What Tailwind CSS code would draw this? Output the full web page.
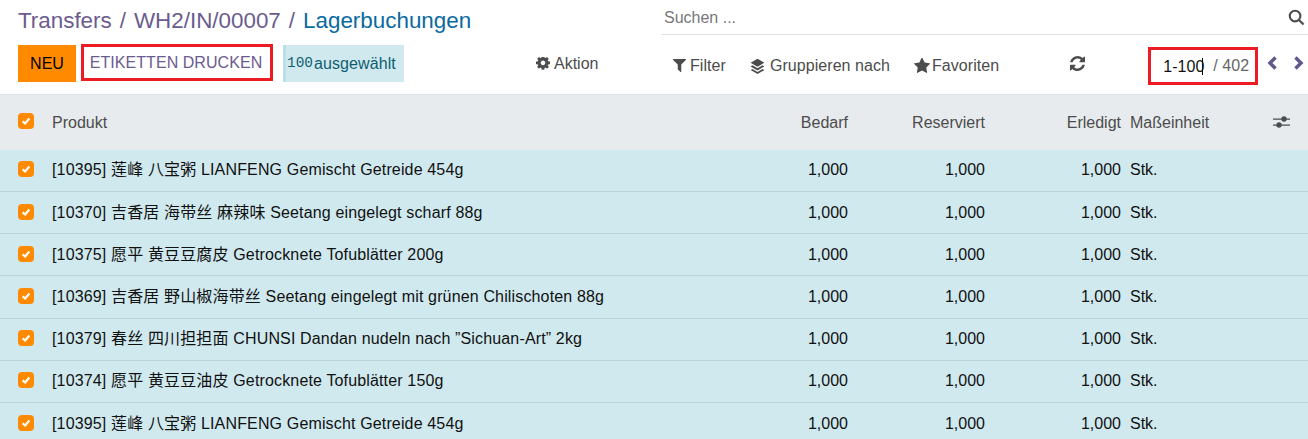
<!DOCTYPE html>
<html lang="de">
<head>
    <meta charset="UTF-8">
    <title>Lagerbuchungen</title>
    <script src="https://cdn.jsdelivr.net/npm/@tailwindcss/browser@4"></script>
</head>
<body class="bg-white h-[439px] w-[1308px] overflow-hidden font-['Liberation_Sans','Noto_Sans_CJK_SC',sans-serif] text-[16px] text-[#212529]">

    <!-- control panel -->
    <div class="flex h-[95px] border-b border-[#dee2e6]">
        <div class="w-[661px] shrink-0 pl-[18px]">
            <div class="flex h-[44px] items-center gap-[8px] pb-[2px] text-[22.4px] text-[#6b5b8f]">
                <span>Transfers</span><span>/</span><span>WH2/IN/00007</span><span>/</span><span class="text-[#0a6aa0]">Lagerbuchungen</span>
            </div>
            <div class="flex h-[38px] items-start">
                <button class="mt-[1px] h-[37px] w-[58px] bg-[#ff8a00] text-black">NEU</button>
                <button class="ml-[5px] h-[37px] w-[192px] border-[3px] border-[#ed1c24] pr-[2px] tracking-[0.06px] text-[#6b5b8f]">ETIKETTEN DRUCKEN</button>
                <div class="mt-[1px] ml-[10px] flex h-[37px] w-[121px] items-center border-l-[3px] border-[#b9e0e8] bg-[#d0e9ef] pl-[1px] text-[#0f5e70]">
                    <span class="font-['Liberation_Mono'] text-[14.4px]">100</span><span class="ml-[1px] tracking-[0.1px]">ausgewählt</span>
                </div>
                <div class="ml-[132px] flex h-[38px] items-center gap-[4px] pt-[2px] text-[#4c4c4c]">
                    <svg class="h-[14px] w-[14px]" viewBox="0 0 1536 1536" fill="#4c4c4c"><path d="M1024 640q0-106-75-181t-181-75-181 75-75 181 75 181 181 75 181-75 75-181zm512-109v222q0 12-8 23t-20 13l-185 28q-19 54-39 91 35 50 107 138 10 12 10 25t-9 23q-27 37-99 108t-94 71q-12 0-26-9l-138-108q-44 23-91 38-16 136-29 186-7 28-36 28h-222q-14 0-24.500-8.500t-11.500-21.500l-28-184q-49-16-90-37l-141 107q-10 9-25 9-14 0-25-11-126-114-165-168-7-10-7-23 0-12 8-23 15-21 51-66.500t54-70.500q-27-50-41-99l-183-27q-13-2-21-12.500t-8-23.500v-222q0-12 8-23t19-13l186-28q14-46 39-92-40-57-107-138-10-12-10-24 0-10 9-23 26-36 98.500-107.500t94.500-71.500q13 0 26 10l138 107q44-23 91-38 16-136 29-186 7-28 36-28h222q14 0 24.500 8.500t11.500 21.500l28 184q49 16 90 37l142-107q9-9 24-9 13 0 25 10 129 119 165 170 7 8 7 22 0 12-8 23-15 21-51 66.500t-54 70.500q26 50 41 98l183 28q13 2 21 12.500t8 23.500z"/></svg>
                    <span>Aktion</span>
                </div>
            </div>
        </div>
        <div class="flex-1">
            <div class="flex h-[35px] items-center justify-between border-b border-[#dee2e6] pl-[3px] pr-[3px] text-[#777]">
                <span class="mt-[2px]">Suchen ...</span>
                <svg class="h-[17px] w-[17px]" viewBox="0 0 24 24" fill="none" stroke="#4c4c4c" stroke-width="3"><circle cx="10" cy="10" r="7.500"/><path d="M15.500 15.500 22 22"/></svg>
            </div>
            <div class="flex h-[59px] items-center pt-[2px] tracking-[0.06px] text-[#4c4c4c]">
                <svg class="ml-[12px] h-[13px] w-[13px]" viewBox="0 128 1408 1408" fill="#4c4c4c"><path d="M1403 167q17 41-14 70l-493 493v742q0 42-39 59-13 5-25 5-27 0-45-19l-256-256q-19-19-19-45v-486l-493-493q-31-29-14-70 17-39 59-39h1280q42 0 59 39z"/></svg>
                <span class="ml-[4px]">Filter</span>
                <svg class="ml-[24px] h-[16px] w-[15px]" viewBox="0 0 24 24" preserveAspectRatio="none" fill="#4c4c4c"><path d="M12 1 23 7l-11 6L1 7z"/><path d="M4 11l8 4.400 8-4.400 3 1.600-11 6-11-6z"/><path d="M4 16.500l8 4.400 8-4.400 3 1.600-11 5.900-11-5.900z"/></svg>
                <span class="ml-[5px]">Gruppieren nach</span>
                <svg class="ml-[24px] h-[16px] w-[16px]" viewBox="0 30 1664 1664" fill="#4c4c4c"><path d="M1664 615q0 22-26 48l-363 354 86 500q1 7 1 20 0 21-10.500 35.500t-30.500 14.500q-19 0-40-12l-449-236-449 236q-22 12-40 12-21 0-31.500-14.500t-10.500-35.500q0-6 2-20l86-500-364-354q-25-27-25-48 0-37 56-46l502-73 225-455q19-41 49-41t49 41l225 455 502 73q56 9 56 46z"/></svg>
                <span class="ml-[2px]">Favoriten</span>
                <svg class="ml-[71px] mb-[5px] h-[15px] w-[15px]" viewBox="0 0 1536 1536" fill="#4c4c4c"><path d="M1511 928q0 5-1 7-64 268-268 434.500t-478 166.500q-146 0-282.500-55t-243.500-157l-129 129q-19 19-45 19t-45-19-19-45v-448q0-26 19-45t45-19h448q26 0 45 19t19 45-19 45l-137 137q71 66 161 102t187 36q134 0 250-65t186-179q11-17 53-117 8-23 30-23h192q13 0 22.500 9.500t9.500 22.500zm25-800v448q0 26-19 45t-45 19h-448q-26 0-45-19t-19-45 19-45l138-138q-148-137-349-137-134 0-250 65t-186 179q-11 17-53 117-8 23-30 23h-199q-13 0-22.500-9.500t-9.500-22.500v-7q65-268 270-434.500t480-166.500q146 0 284 55.500t245 156.500l130-129q19-19 45-19t45 19 19 45z"/></svg>
                <div class="ml-[63px] mt-[1px] flex h-[38px] w-[110px] shrink-0 items-center whitespace-nowrap border-[3px] border-[#ed1c24] pl-[12px] text-[#111]">
                    <span class="w-[40px] border-r border-black leading-[17px]">1-100</span>
                    <span class="ml-[10px] text-[#666]">/ 402</span>
                </div>
                <svg class="ml-[9px] mb-[5px] h-[14px] w-[11px] shrink-0" viewBox="0 0 11 14" fill="none" stroke="#5f5a8d" stroke-width="3.500"><path d="M8.500 1.500 3 7l5.500 5.500"/></svg>
                <svg class="ml-[15px] mb-[5px] h-[14px] w-[11px] shrink-0" viewBox="0 0 11 14" fill="none" stroke="#5f5a8d" stroke-width="3.500"><path d="M2.500 1.500 8 7l-5.500 5.500"/></svg>
            </div>
        </div>
    </div>

    <!-- table header -->
    <div class="flex h-[54.8px] items-center bg-[#e7ebee] text-[#4c4c4c]">
        <div class="ml-[18px] mb-[2px] flex h-[16px] w-[16px] items-center justify-center rounded-[4px] bg-[#ff8a00]">
            <svg class="h-[10px] w-[10px]" viewBox="0 0 12 12" fill="none" stroke="#fff" stroke-width="2.500"><path d="M2 6.500 5 9l5-6"/></svg>
        </div>
        <div class="ml-[18px] w-[660px] pt-[2px]">Produkt</div>
        <div class="w-[136px] pt-[2px] text-right">Bedarf</div>
        <div class="w-[137px] pt-[2px] text-right">Reserviert</div>
        <div class="w-[136px] pt-[2px] text-right">Erledigt</div>
        <div class="ml-[9px] w-[143px] pt-[2px]">Maßeinheit</div>
        <svg class="h-[16px] w-[17px]" viewBox="0 0 17 16" fill="#4c4c4c"><path d="M0 4.500h17v1.200H0zM0 10.500h17v1.200H0z"/><circle cx="11" cy="5" r="2.700"/><circle cx="6" cy="11" r="2.700"/></svg>
    </div>

    <!-- rows -->
    <div class="text-[#111]">
        <div class="flex h-[42.2px] items-center border-b border-[#b9d5dc] bg-[#d0e9ef]">
            <div class="ml-[18px] mb-[2px] flex h-[16px] w-[16px] items-center justify-center rounded-[4px] bg-[#ff8a00]"><svg class="h-[10px] w-[10px]" viewBox="0 0 12 12" fill="none" stroke="#fff" stroke-width="2.500"><path d="M2 6.500 5 9l5-6"/></svg></div>
            <div class="ml-[18px] w-[660px] tracking-[0.15px]">[10395] 莲峰 八宝粥 LIANFENG Gemischt Getreide 454g</div>
            <div class="w-[136px] text-right">1,000</div><div class="w-[137px] text-right">1,000</div><div class="w-[136px] text-right">1,000</div>
            <div class="ml-[9px]">Stk.</div>
        </div>
        <div class="flex h-[42.2px] items-center border-b border-[#b9d5dc] bg-[#d0e9ef]">
            <div class="ml-[18px] mb-[2px] flex h-[16px] w-[16px] items-center justify-center rounded-[4px] bg-[#ff8a00]"><svg class="h-[10px] w-[10px]" viewBox="0 0 12 12" fill="none" stroke="#fff" stroke-width="2.500"><path d="M2 6.500 5 9l5-6"/></svg></div>
            <div class="ml-[18px] w-[660px] tracking-[0.15px]">[10370] 吉香居 海带丝 麻辣味 Seetang eingelegt scharf 88g</div>
            <div class="w-[136px] text-right">1,000</div><div class="w-[137px] text-right">1,000</div><div class="w-[136px] text-right">1,000</div>
            <div class="ml-[9px]">Stk.</div>
        </div>
        <div class="flex h-[42.2px] items-center border-b border-[#b9d5dc] bg-[#d0e9ef]">
            <div class="ml-[18px] mb-[2px] flex h-[16px] w-[16px] items-center justify-center rounded-[4px] bg-[#ff8a00]"><svg class="h-[10px] w-[10px]" viewBox="0 0 12 12" fill="none" stroke="#fff" stroke-width="2.500"><path d="M2 6.500 5 9l5-6"/></svg></div>
            <div class="ml-[18px] w-[660px] tracking-[0.15px]">[10375] 愿平 黄豆豆腐皮 Getrocknete Tofublätter 200g</div>
            <div class="w-[136px] text-right">1,000</div><div class="w-[137px] text-right">1,000</div><div class="w-[136px] text-right">1,000</div>
            <div class="ml-[9px]">Stk.</div>
        </div>
        <div class="flex h-[42.2px] items-center border-b border-[#b9d5dc] bg-[#d0e9ef]">
            <div class="ml-[18px] mb-[2px] flex h-[16px] w-[16px] items-center justify-center rounded-[4px] bg-[#ff8a00]"><svg class="h-[10px] w-[10px]" viewBox="0 0 12 12" fill="none" stroke="#fff" stroke-width="2.500"><path d="M2 6.500 5 9l5-6"/></svg></div>
            <div class="ml-[18px] w-[660px] tracking-[0.15px]">[10369] 吉香居 野山椒海带丝 Seetang eingelegt mit grünen Chilischoten 88g</div>
            <div class="w-[136px] text-right">1,000</div><div class="w-[137px] text-right">1,000</div><div class="w-[136px] text-right">1,000</div>
            <div class="ml-[9px]">Stk.</div>
        </div>
        <div class="flex h-[42.2px] items-center border-b border-[#b9d5dc] bg-[#d0e9ef]">
            <div class="ml-[18px] mb-[2px] flex h-[16px] w-[16px] items-center justify-center rounded-[4px] bg-[#ff8a00]"><svg class="h-[10px] w-[10px]" viewBox="0 0 12 12" fill="none" stroke="#fff" stroke-width="2.500"><path d="M2 6.500 5 9l5-6"/></svg></div>
            <div class="ml-[18px] w-[660px] tracking-[0.15px]">[10379] 春丝 四川担担面 CHUNSI Dandan nudeln nach ”Sichuan-Art” 2kg</div>
            <div class="w-[136px] text-right">1,000</div><div class="w-[137px] text-right">1,000</div><div class="w-[136px] text-right">1,000</div>
            <div class="ml-[9px]">Stk.</div>
        </div>
        <div class="flex h-[42.2px] items-center border-b border-[#b9d5dc] bg-[#d0e9ef]">
            <div class="ml-[18px] mb-[2px] flex h-[16px] w-[16px] items-center justify-center rounded-[4px] bg-[#ff8a00]"><svg class="h-[10px] w-[10px]" viewBox="0 0 12 12" fill="none" stroke="#fff" stroke-width="2.500"><path d="M2 6.500 5 9l5-6"/></svg></div>
            <div class="ml-[18px] w-[660px] tracking-[0.15px]">[10374] 愿平 黄豆豆油皮 Getrocknete Tofublätter 150g</div>
            <div class="w-[136px] text-right">1,000</div><div class="w-[137px] text-right">1,000</div><div class="w-[136px] text-right">1,000</div>
            <div class="ml-[9px]">Stk.</div>
        </div>
        <div class="flex h-[42.2px] items-center border-b border-[#b9d5dc] bg-[#d0e9ef]">
            <div class="ml-[18px] mb-[2px] flex h-[16px] w-[16px] items-center justify-center rounded-[4px] bg-[#ff8a00]"><svg class="h-[10px] w-[10px]" viewBox="0 0 12 12" fill="none" stroke="#fff" stroke-width="2.500"><path d="M2 6.500 5 9l5-6"/></svg></div>
            <div class="ml-[18px] w-[660px] tracking-[0.15px]">[10395] 莲峰 八宝粥 LIANFENG Gemischt Getreide 454g</div>
            <div class="w-[136px] text-right">1,000</div><div class="w-[137px] text-right">1,000</div><div class="w-[136px] text-right">1,000</div>
            <div class="ml-[9px]">Stk.</div>
        </div>
    </div>
</body>
</html>
